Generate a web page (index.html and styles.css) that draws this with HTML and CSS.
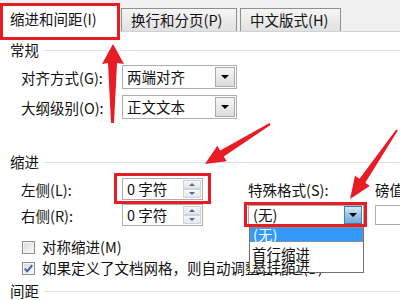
FILE: index.html
```html
<!DOCTYPE html>
<html lang="zh-CN">
<head>
<meta charset="utf-8">
<title>段落</title>
<link rel="stylesheet" href="styles.css">
</head>
<body>
<div class="dialog">
  <div class="tabbar">
    <div class="tab active">缩进和间距(I)</div>
    <div class="tab tab-2">换行和分页(P)</div>
    <div class="tab tab-3">中文版式(H)</div>
  </div>
  <div class="panel">
    <div class="section sec-general"><span>常规</span><i class="rule"></i></div>
    <div class="field-row row-1">
      <span class="label">对齐方式(G):</span>
      <div class="combo"><span class="value">两端对齐</span><span class="drop"><i class="tri"></i></span></div>
    </div>
    <div class="field-row row-2">
      <span class="label">大纲级别(O):</span>
      <div class="combo"><span class="value">正文文本</span><span class="drop"><i class="tri"></i></span></div>
    </div>

    <div class="section sec-indent"><span>缩进</span><i class="rule"></i></div>
    <div class="indent-grid">
      <span class="label">左侧(L):</span>
      <div class="spin"><span class="val">0 字符</span><span class="btns"><i class="up"></i><i class="down"></i></span></div>
      <span></span>
      <span class="label">特殊格式(S):</span>
      <span></span>
      <span class="label">磅值</span>

      <span class="label">右侧(R):</span>
      <div class="spin"><span class="val">0 字符</span><span class="btns"><i class="up"></i><i class="down"></i></span></div>
      <span></span>
      <div class="combo combo-open"><span class="value">(无)</span><span class="drop drop-hot"><i class="tri"></i></span></div>
      <span></span>
      <div class="box"></div>
    </div>

    <div class="check-row row-sym"><span class="cb"></span><span>对称缩进(M)</span></div>
    <div class="check-row row-grid"><span class="cb checked"><svg width="11" height="11" viewBox="0 0 11 11"><path d="M1.8 5.6 L4.3 8.3 L9.2 2.2" fill="none" stroke="#3b5fae" stroke-width="1.9"/></svg></span><span>如果定义了文档网格，则自动调整右缩进(D)</span></div>

    <div class="section sec-spacing"><span>间距</span><i class="rule"></i></div>
  </div>

  <ul class="droplist">
    <li class="sel">(无)</li>
    <li>首行缩进</li>
    <li>悬挂缩进</li>
  </ul>

  <svg class="annot" width="400" height="300" viewBox="0 0 400 300">
    <g fill="none" stroke="#e81c24" stroke-width="3">
      <rect x="1.5" y="4.5" width="117" height="34"/>
      <rect x="115.5" y="174.5" width="94" height="28"/>
      <rect x="245.5" y="203.5" width="120" height="22"/>
    </g>
    <g fill="#e81c24">
      <polygon points="113,44 124,64 117,63 114,123 111,123 108,63 102,64"/>
      <polygon points="205,164 226.7,161.2 223.8,156.5 270.5,124.9 269.5,123.1 220.2,150.5 217.3,145.8"/>
      <polygon points="350,199 369.8,185.9 365.3,182.8 397.8,130.6 396.2,129.4 359.5,178.8 355,175.7"/>
    </g>
  </svg>
</div>
</body>
</html>
```
FILE: styles.css
```css
* { box-sizing: border-box; }
html, body { margin: 0; padding: 0; }
body {
  width: 400px;
  height: 300px;
  overflow: hidden;
  background: #fff;
  font-family: "Noto Sans CJK SC", "Noto Sans", sans-serif;
  font-size: 14.5px;
  color: #111;
}
.dialog { position: relative; width: 400px; height: 300px; overflow: hidden; }

/* tabs */
.tabbar {
  display: flex;
  align-items: flex-end;
  height: 32px;
  background: #f0f0f0;
  border-bottom: 1px solid #cdd3da;
}
.tab {
  height: 23px;
  padding: 1px 0 0 9px;
  border: 1px solid #8e8f8f;
  border-bottom: none;
  background: linear-gradient(#f5f5f5, #e1e1e1);
  line-height: 20px;
  white-space: nowrap;
}
.tab.active {
  width: 120px;
  height: 29px;
  margin-bottom: -1px;
  padding: 5px 0 0 10px;
  border-left: none;
  background: #fff;
}
.tab-2 { width: 116px; margin-left: 1px; }
.tab-3 { width: 101px; margin-left: 3px; }

/* panel */
.panel { padding-left: 10px; }
.section {
  display: flex;
  align-items: center;
  gap: 5px;
  height: 20px;
  line-height: 20px;
}
.section .rule { flex: 1; height: 1px; background: #dde2e8; }
.sec-general { margin-top: 8px; }
.sec-indent { margin-top: 33px; }
.sec-spacing { margin-top: 3px; }

.field-row {
  display: flex;
  align-items: center;
  height: 24px;
  margin-left: 11px;
}
.row-1 { margin-top: 5px; }
.row-2 { margin-top: 6px; }
.label { white-space: nowrap; }
.field-row .label { width: 101px; }

.combo {
  width: 115px;
  height: 24px;
  border: 1px solid #abadb3;
  background: #fff;
  display: flex;
  align-items: center;
  justify-content: space-between;
  padding-left: 4px;
  line-height: 20px;
}
.drop {
  width: 20px;
  height: 20px;
  margin-right: 1px;
  border: 1px solid #a9a9a9;
  background: linear-gradient(#f6f6f6, #dcdcdc);
  display: flex;
  align-items: center;
  justify-content: center;
}
.tri {
  width: 0;
  height: 0;
  border-left: 4px solid transparent;
  border-right: 4px solid transparent;
  border-top: 4px solid #000;
}

/* indent grid */
.indent-grid {
  display: grid;
  grid-template-columns: 101px 81px 45px 116px 11px 40px;
  grid-template-rows: 22px 22px;
  row-gap: 4px;
  align-items: center;
  margin: 6px 0 0 11px;
}
.spin {
  height: 22px;
  border: 1px solid #abadb3;
  background: #fff;
  display: flex;
  align-items: center;
  padding-left: 4px;
}
.spin .val { flex: 1; white-space: pre; line-height: 20px; }
.btns {
  width: 18px;
  height: 18px;
  margin-right: 1px;
  display: flex;
  flex-direction: column;
}
.btns i {
  flex: 1;
  border: 1px solid #cfd3d8;
  background: linear-gradient(#f7f7f7, #e4e6e9);
  display: flex;
  align-items: center;
  justify-content: center;
}
.btns i::after {
  content: "";
  width: 0;
  height: 0;
  border-left: 3px solid transparent;
  border-right: 3px solid transparent;
}
.btns .up::after { border-bottom: 3px solid #4a6aa8; }
.btns .down::after { border-top: 3px solid #4a6aa8; }

.combo-open { width: 116px; height: 21px; }
.combo-open .drop { height: 18px; width: 18px; }
.drop-hot {
  border-color: #3c7fb1;
  background: linear-gradient(#d6eaf8, #9cc6e6 50%, #74a9d2);
}
.box { height: 20px; border: 1px solid #abadb3; background: #fff; }

/* checkboxes */
.check-row {
  display: flex;
  align-items: center;
  gap: 7px;
  height: 20px;
  margin-left: 12px;
  white-space: nowrap;
  line-height: 20px;
}
.row-sym { margin-top: 11px; }
.row-grid { margin-top: 1px; }
.cb {
  flex: none;
  width: 13px;
  height: 13px;
  border: 1px solid #8e8f8f;
  background: linear-gradient(135deg, #d9dcdf, #f7f8f9);
  box-shadow: inset 0 0 0 1px #f4f4f4;
  display: flex;
  align-items: center;
  justify-content: center;
}

/* open dropdown list */
.droplist {
  position: absolute;
  left: 249px;
  top: 226px;
  width: 115px;
  height: 47px;
  margin: 0;
  padding: 0;
  list-style: none;
  background: #fff;
  border: 1px solid #707070;
}
.droplist li {
  height: 12px;
  line-height: 12px;
  padding-left: 2px;
  white-space: nowrap;
}
.droplist li.sel {
  height: 15px;
  line-height: 14px;
  margin-bottom: 6px;
  background: #3399ff;
  color: #fff;
  border: 1px dotted #c98a3a;
}

/* annotations */
.annot { position: absolute; left: 0; top: 0; pointer-events: none; }
```
